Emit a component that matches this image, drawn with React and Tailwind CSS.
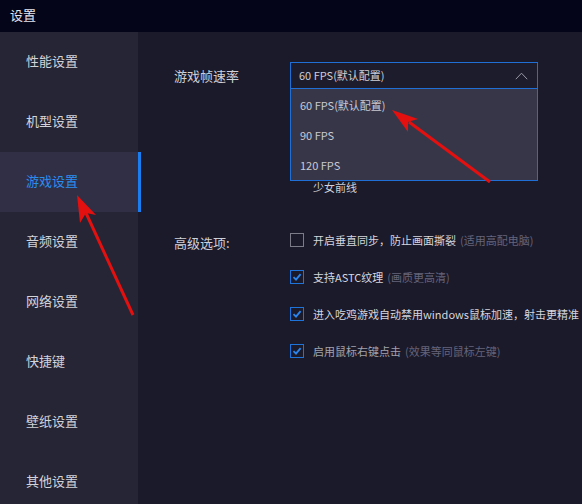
import React from "react";

const menu = ["性能设置", "机型设置", "游戏设置", "音频设置", "网络设置", "快捷键", "壁纸设置", "其他设置"];

const options = [
  { text: "开启垂直同步，防止画面撕裂", hint: "(适用高配电脑)", checked: false },
  { text: "支持ASTC纹理", hint: "(画质更高清)", checked: true },
  { text: "进入吃鸡游戏自动禁用windows鼠标加速，射击更精准", hint: "", checked: true },
  { text: "启用鼠标右键点击", hint: "(效果等同鼠标左键)", checked: true, dim: true },
];

const Check = ({ checked }) =>
  checked ? (
    <div className="w-[14px] h-[14px] shrink-0 border border-[#1f74dc] flex items-center justify-center">
      <svg width="10" height="10" viewBox="0 0 10 10">
        <path d="M1.5 5.2 L4 7.6 L8.6 2.2" fill="none" stroke="#2a86ee" strokeWidth="1.8" />
      </svg>
    </div>
  ) : (
    <div className="w-[14px] h-[14px] shrink-0 border border-[#7c7b88]" />
  );

const App = () => {
  return (
    <div
      className="relative w-[582px] h-[504px] flex flex-col bg-[#1b1a2a] overflow-hidden text-[13px]"
      style={{ fontFamily: '"Noto Sans CJK SC", "Microsoft YaHei", sans-serif' }}
    >
      <div className="h-[32px] shrink-0 bg-[#05051a] flex items-center px-[10px] pb-[2px] text-[#e6e6ee]">设置</div>

      <div className="flex flex-1">
        <div className="w-[138px] shrink-0 bg-[#262535] flex flex-col">
          {menu.map((m, i) => (
            <div
              key={m}
              className={
                i === 2
                  ? "relative h-[60px] flex items-center pl-[26px] pb-[3px] bg-[#302f46] text-[#2a8ef0]"
                  : "h-[60px] flex items-center pl-[26px] pb-[3px] text-[#d3d3da]"
              }
            >
              {m}
              {i === 2 && <div className="absolute top-0 -right-[3px] w-[3px] h-full bg-[#1a7ef0]" />}
            </div>
          ))}
        </div>

        <div className="flex-1 pl-[36px] pt-[30px] text-[#d0d0d8]">
          <div className="flex items-start">
            <div className="w-[116px] h-[27px] flex items-center">游戏帧速率</div>
            <div className="relative w-[248px]">
              <div className="h-[27px] border border-[#1f6fd6] bg-[#1d1c2d] flex items-center justify-between pl-[8px] pr-[9px] text-[11px] text-[#cfcfd7]">
                <span>60 FPS(默认配置)</span>
                <svg width="13" height="8" viewBox="0 0 13 8">
                  <path d="M0.8 7.2 L6.5 1.2 L12.2 7.2" fill="none" stroke="#9a9aa6" strokeWidth="1" />
                </svg>
              </div>
              <div className="absolute left-0 top-[27px] w-[248px] h-[92px] z-10 bg-[#373649] border border-t-0 border-[#1f6fd6] flex flex-col pt-[1px] text-[11px] text-[#c9c9d2]">
                <div className="h-[30px] flex items-center pl-[9px]">60 FPS(默认配置)</div>
                <div className="h-[30px] flex items-center pl-[9px]">90 FPS</div>
                <div className="h-[30px] flex items-center pl-[9px]">120 FPS</div>
              </div>
            </div>
          </div>

          <div className="mt-[89px] pl-[139px] leading-[18px] text-[11px] text-[#d0d0d8]">少女前线</div>

          <div className="flex items-start mt-[36px]">
            <div className="w-[116px] mt-[3px] leading-[16px]">高级选项:</div>
            <div className="flex flex-col gap-[21px]">
              {options.map((o) => (
                <div key={o.text} className="h-[16px] flex items-center gap-[9px] text-[11px] whitespace-nowrap">
                  <Check checked={o.checked} />
                  <span className={o.dim ? "text-[#a3a3ad]" : "text-[#d6d6de]"}>
                    {o.text}
                    {o.hint && <span className="text-[#65647a] ml-[4px]">{o.hint}</span>}
                  </span>
                </div>
              ))}
            </div>
          </div>
        </div>
      </div>

      <svg className="absolute inset-0 pointer-events-none z-20" width="582" height="504">
        <line x1="490" y1="182" x2="409" y2="122" stroke="#e3100f" strokeWidth="3" />
        <polygon points="392,110 418,119 408,122 408,132" fill="#e3100f" />
        <line x1="133" y1="315" x2="86" y2="213" stroke="#e3100f" strokeWidth="3" />
        <polygon points="77,195 96,215 86,213 80,223" fill="#e3100f" />
      </svg>
    </div>
  );
};

export default App;
